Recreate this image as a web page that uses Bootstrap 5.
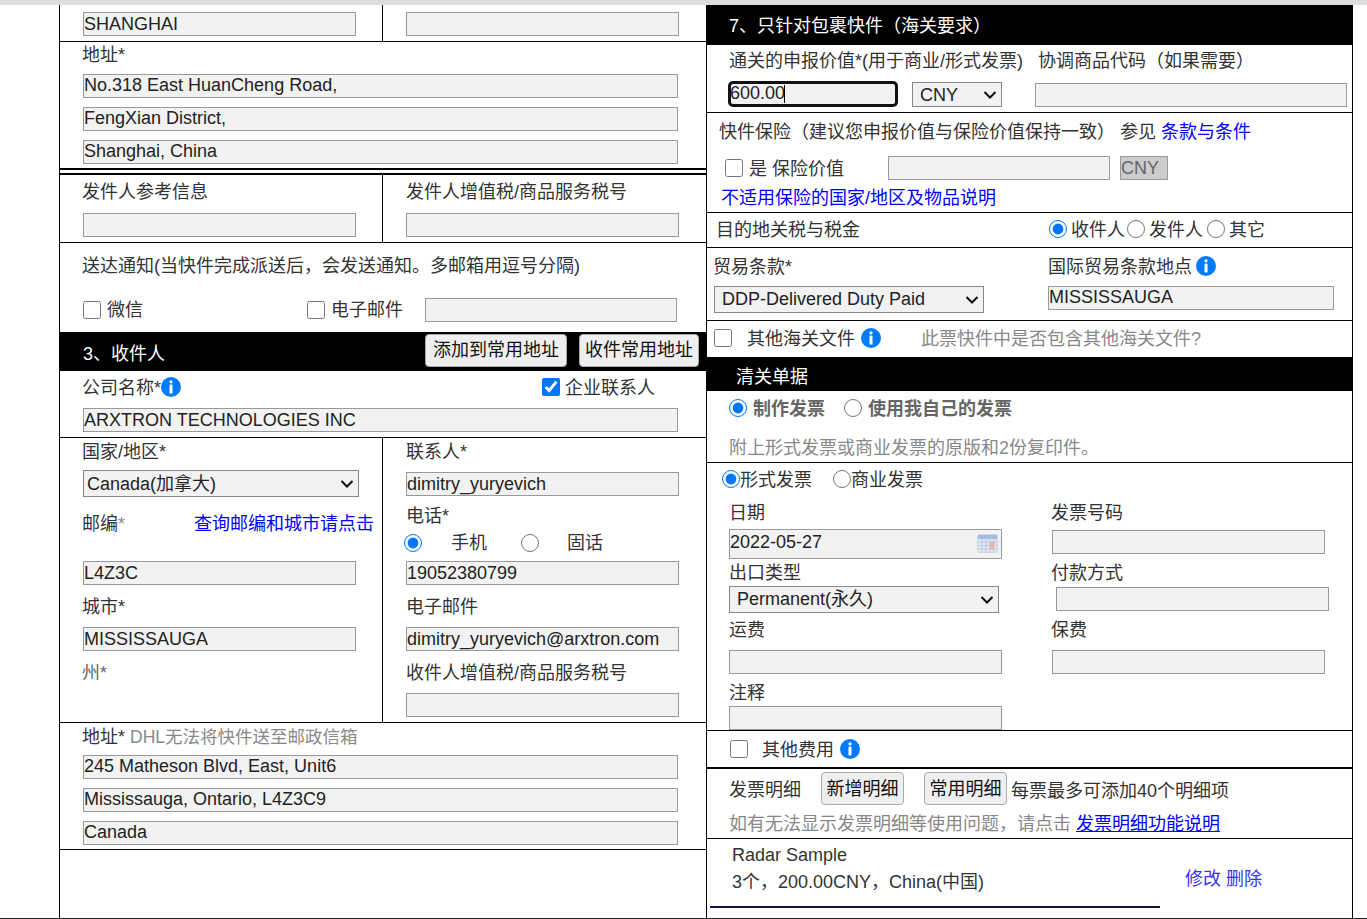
<!DOCTYPE html>
<html lang="zh-CN">
<head>
<meta charset="UTF-8">
<title>运单</title>
<link href="https://cdn.jsdelivr.net/npm/bootstrap@5.3.0/dist/css/bootstrap.min.css" rel="stylesheet">
<style>
    html, body { height: 919px; overflow: hidden; }
    body {
        background: #fff;
        color: #333;
        font-family: "Liberation Sans", "Noto Sans CJK SC", sans-serif;
        font-size: 18px;
        line-height: 24px;
    }
    .page-wrap { height: 919px; border-top: 5px solid #ddd; border-bottom: 1px solid #222; overflow: hidden; padding-left: 59px; }
    .pane-l, .pane-r { width: 647px; height: 100%; border-left: 1px solid #000; flex: none; }
    .pane-r { border-right: 1px solid #000; }

    /* text line that sits 1px lower in its 24px slot */
    .tl, .tl > span, .tl > a { height: 24px; line-height: 26px; }
    .tl-l { margin-left: -1px; }

    .line-b { border-bottom: 1px solid #000; }
    .fld {
        display: block; height: 24px; padding: 0; flex: none;
        background: #f2f2f2; border: 1px solid #999; border-radius: 0;
        color: #222; font-size: 18px; line-height: 20px; outline: none;
    }
    .fld-up { padding-bottom: 2px; }
    .sel {
        display: block; height: 27px; flex: none; padding: 0 20px 0 7px;
        appearance: none;
        background: #f2f2f2 url("data:image/svg+xml,%3csvg xmlns='http://www.w3.org/2000/svg' viewBox='0 0 14 10'%3e%3cpath fill='none' stroke='%23111' stroke-width='2' d='M1.5 2l5.5 5.5L12.5 2'/%3e%3c/svg%3e") no-repeat right 4px center / 14px 10px;
        border: 1px solid #888; border-radius: 0;
        color: #222; font-size: 18px;
    }
    .sel-up { padding-bottom: 2px; }
    .w-273 { width: 273px; }
    .w-595 { width: 595px; }
    .ck { width: 18px; height: 18px; margin: 0; flex: none; }
    .info-ic { width: 20px; height: 24px; flex: none; }
    .txt-gray { color: #888; }
    .txt-mid { color: #666; }
    .txt-dhl { font-size: 17.5px; }
    a.lnk { color: #00f; text-decoration: none; }
    a.lnk-u { color: #00f; text-decoration: underline; }
    a.lnk-soft { color: #33f; text-decoration: none; }
    .bar-dark { background: #000; color: #fff; }
    .btn-plain {
        height: 33px; padding: 0 7px; background: #efefef; color: #111;
        border: 1px solid #aaa; border-radius: 4px; font-size: 18px; line-height: 28px;
    }
    .btn-bar { padding-bottom: 2px; }
    .btn-bar-sm { padding-left: 5px; padding-right: 5px; }

    /* left pane */
    .ls-top { height: 37px; }
    .lcol-a { width: 323px; padding-left: 23px; border-right: 1px solid #000; flex: none; }
    .lcol-b { padding-left: 23px; flex: 1; }
    .ls-top .lcol-a, .ls-top .lcol-b { padding-top: 7px; }
    .addr-box { padding: 0 0 4px 23px; }
    .addr-box .fld { margin-top: 9px; }
    .addr-box .fld.first { margin-top: 8px; }
    .addr-box.dbl { border-bottom: 7px double #000; }
    .addr-recv { padding-top: 1px; }
    .addr-recv .fld.first { margin-top: 7px; }
    .ls-ref { height: 68px; }
    .ls-ref .lcol-a, .ls-ref .lcol-b { padding-top: 4px; }
    .mt-10 { margin-top: 10px; }
    .ls-notify { padding: 10px 0 10px 23px; }
    .notify-row { margin-top: 21px; height: 24px; }
    .ml-ck-2 { margin-left: 164px; }
    .ml-in-2 { margin-left: 22px; width: 252px; }
    .bar-recv { height: 39px; padding: 2px 7px 0 23px; }
    .bar-recv .bar-ttl { margin-top: 8px; }
    .ls-comp { padding: 4px 0 5px 23px; }
    .ck-comp { margin-left: 361px; }
    .ls-comp .fld { margin-top: 9px; }
    .ls-contact { height: 285px; }
    .ls-contact .lcol-a, .ls-contact .lcol-b { padding-top: 1px; }
    .sel-country { width: 276px; margin-top: 7px; padding-left: 3px; }
    .zip-line { margin-top: 14px; width: 292px; }
    .mt-26 { margin-top: 26px; }
    .mt-9 { margin-top: 9px; }
    .mt-8 { margin-top: 8px; }
    .mt-7 { margin-top: 7px; }
    .tel-row { height: 34px; padding-bottom: 2px; margin-left: -2px; }
    .tel-row .gap-a { margin-left: 29px; }
    .tel-row .gap-b { margin-left: 34px; }
    .tel-row .gap-c { margin-left: 28px; }

    /* right pane */
    .bar-r7 { height: 40px; padding: 8px 0 0 22px; }
    .rs-decl { padding: 3px 5px 5px 22px; }
    .decl-lab-b { margin-left: 15px; }
    .decl-ctl { margin-top: 10px; height: 25px; }
    .focus-wrap { width: 168px; height: 24px; flex: none; }
    .fld-focus { width: 100%; border: 2px solid #111; border-radius: 4px; box-shadow: 0 0 0 1px #111; text-indent: -1px; }
    .caret-mark { position: absolute; left: 55px; top: 3px; width: 1px; height: 18px; background: #000; }
    .sel-cny { width: 90px; height: 25px; margin-left: 15px; }
    .fld-hs { width: 312px; margin: 1px 0 0 33px; }
    .rs-ins { padding: 6px 0 3px 12px; }
    .ins-row { margin-top: 13px; padding-left: 6px; }
    .ins-lab { margin-left: 6px; width: 139px; }
    .fld-ins { width: 222px; }
    .cny-tag { width: 48px; height: 24px; margin-left: 10px; background: #ccc; border: 1px solid #999; color: #666; line-height: 22px; }
    .ins-link { margin: 5px 0 0 2px; }
    .rs-tax { padding: 4px 0 6px 9px; }
    .tax-lab { width: 333px; flex: none; }
    .rad-gap { margin-left: 2px; }
    .rad-gap-b { margin-left: 4px; }
    .rs-terms { padding: 6px 0 7px 7px; }
    .terms-col { width: 334px; flex: none; }
    .sel-terms { width: 270px; margin-top: 8px; }
    .fld-place { width: 286px; margin-top: 8px; }
    .rs-other { padding: 5px 0 7px 7px; }
    .oth-lab { margin-left: 15px; }
    .oth-hint { margin-left: 40px; }
    .bar-docs { height: 34px; padding: 7px 0 0 29px; }
    .rs-docs { padding: 5px 0 3px 22px; }
    .rs-docs .mt-15 { margin-top: 15px; }
    .ml-5 { margin-left: 5px; }
    .ml-6 { margin-left: 6px; }
    .ml-19 { margin-left: 19px; }
    .ml-21 { margin-left: 21px; }
    .rs-inv { height: 268px; padding: 4px 0 0 15px; }
    .inv-grid { margin: 9px 0 0 7px; }
    .inv-l { width: 323px; flex: none; }
    .date-wrap { width: 273px; height: 30px; margin-top: 5px; }
    .date-wrap .fld { height: 30px; width: 100%; padding-bottom: 4px; }
    .cal-ic { position: absolute; right: 4px; top: 5px; width: 21px; height: 19px; opacity: .8; }
    .sel-exp { width: 270px; margin-top: 2px; }
    .ml-pay { margin-left: 4px; }
    .mt-1p { margin-top: 1px; }
    .mt-6 { margin-top: 6px; }
    .mt-3p { margin-top: 3px; }
    .mt-4p { margin-top: 4px; }
    .mt-2p { margin-top: 2px; }
    .rs-fee { padding: 6px 0 6px 23px; border-bottom: 2px solid #000; }
    .ml-14 { margin-left: 14px; }
    .rs-detail { padding: 3px 0 3px 22px; }
    .det-lab { width: 92px; flex: none; padding-top: 6px; }
    .btn-det { width: 83px; padding: 0; }
    .ml-20 { margin-left: 20px; }
    .det-note { padding-top: 7px; margin-left: 4px; }
    .rs-item { padding-top: 4px; }
    .item-main { width: 478px; padding-left: 25px; flex: none; }
    .item-act { padding-top: 24px; }
    .item-rule { width: 450px; height: 2px; margin: 12px 0 0 3px; background: #14124a; }
</style>
</head>
<body>
<svg class="d-none">
    <symbol id="ic-info" viewBox="0 0 20 24">
        <circle cx="10" cy="12" r="10" fill="#007bff"/>
        <circle cx="10" cy="6.8" r="1.6" fill="#fff"/>
        <rect x="8.5" y="9.6" width="3" height="9" rx=".6" fill="#fff"/>
    </symbol>
</svg>
<div class="page-wrap d-flex">
    <div class="pane-l">
        <div class="ls-top d-flex line-b">
            <div class="lcol-a"><input class="fld w-273" value="SHANGHAI"></div>
            <div class="lcol-b"><input class="fld w-273"></div>
        </div>
        <div class="addr-box dbl">
            <div class="tl tl-l">地址*</div>
            <input class="fld fld-up w-595 first" value="No.318 East HuanCheng Road,">
            <input class="fld fld-up w-595" value="FengXian District,">
            <input class="fld fld-up w-595" value="Shanghai, China">
        </div>
        <div class="ls-ref d-flex line-b">
            <div class="lcol-a">
                <div class="tl tl-l">发件人参考信息</div>
                <input class="fld w-273 mt-10">
            </div>
            <div class="lcol-b">
                <div class="tl">发件人增值税/商品服务税号</div>
                <input class="fld w-273 mt-10">
            </div>
        </div>
        <div class="ls-notify">
            <div class="tl tl-l">送达通知(当快件完成派送后，会发送通知。多邮箱用逗号分隔)</div>
            <div class="notify-row d-flex align-items-center">
                <input type="checkbox" class="ck">
                <span class="ml-6">微信</span>
                <input type="checkbox" class="ck ml-ck-2">
                <span class="ml-6">电子邮件</span>
                <input class="fld ml-in-2">
            </div>
        </div>
        <div class="bar-recv bar-dark d-flex gap-2 align-items-start">
            <div class="bar-ttl me-auto">3、收件人</div>
            <button class="btn-plain btn-bar" type="button">添加到常用地址</button>
            <button class="btn-plain btn-bar btn-bar-sm ms-1" type="button">收件常用地址</button>
        </div>
        <div class="ls-comp line-b">
            <div class="tl tl-l d-flex align-items-center">
                <span>公司名称*</span>
                <svg class="info-ic"><use href="#ic-info"/></svg>
                <input type="checkbox" class="ck ck-comp" checked>
                <span class="ml-5">企业联系人</span>
            </div>
            <input class="fld w-595" value="ARXTRON TECHNOLOGIES INC">
        </div>
        <div class="ls-contact d-flex line-b">
            <div class="lcol-a">
                <div class="tl tl-l">国家/地区*</div>
                <select class="sel sel-country"><option>Canada(加拿大)</option></select>
                <div class="tl tl-l zip-line d-flex justify-content-between">
                    <span>邮编<span class="txt-gray">*</span></span>
                    <a href="#" class="lnk">查询邮编和城市请点击</a>
                </div>
                <input class="fld w-273 mt-26" value="L4Z3C">
                <div class="tl tl-l mt-9">城市*</div>
                <input class="fld w-273 mt-9" value="MISSISSAUGA">
                <div class="tl tl-l mt-9 txt-mid">州*</div>
            </div>
            <div class="lcol-b">
                <div class="tl">联系人*</div>
                <input class="fld w-273 mt-9" value="dimitry_yuryevich">
                <div class="tl mt-7">电话*</div>
                <div class="tel-row d-flex align-items-center">
                    <input type="radio" class="ck" name="tel" checked>
                    <span class="gap-a">手机</span>
                    <input type="radio" class="ck gap-b" name="tel">
                    <span class="gap-c">固话</span>
                </div>
                <input class="fld w-273" value="19052380799">
                <div class="tl mt-9">电子邮件</div>
                <input class="fld w-273 mt-9" value="dimitry_yuryevich@arxtron.com">
                <div class="tl mt-9">收件人增值税/商品服务税号</div>
                <input class="fld w-273 mt-9">
            </div>
        </div>
        <div class="addr-box addr-recv line-b">
            <div class="tl tl-l">地址* <span class="txt-gray txt-dhl">DHL无法将快件送至邮政信箱</span></div>
            <input class="fld fld-up w-595 first" value="245 Matheson Blvd, East, Unit6">
            <input class="fld fld-up w-595" value="Mississauga, Ontario, L4Z3C9">
            <input class="fld fld-up w-595" value="Canada">
        </div>
    </div>

    <div class="pane-r">
        <div class="bar-r7 bar-dark"><div class="tl">7、只针对包裹快件（海关要求）</div></div>
        <div class="rs-decl line-b">
            <div class="tl d-flex">
                <span>通关的申报价值*(用于商业/形式发票)</span>
                <span class="decl-lab-b">协调商品代码（如果需要）</span>
            </div>
            <div class="decl-ctl d-flex">
                <div class="focus-wrap position-relative">
                    <input class="fld fld-up fld-focus" value="600.00">
                    <span class="caret-mark"></span>
                </div>
                <select class="sel sel-cny"><option>CNY</option></select>
                <input class="fld fld-hs">
            </div>
        </div>
        <div class="rs-ins line-b">
            <div class="tl">快件保险（建议您申报价值与保险价值保持一致） 参见 <a href="#" class="lnk">条款与条件</a></div>
            <div class="tl ins-row d-flex align-items-center">
                <input type="checkbox" class="ck">
                <span class="ins-lab">是 保险价值</span>
                <input class="fld fld-ins">
                <div class="cny-tag">CNY</div>
            </div>
            <div class="tl ins-link"><a href="#" class="lnk">不适用保险的国家/地区及物品说明</a></div>
        </div>
        <div class="rs-tax d-flex align-items-center line-b">
            <div class="tax-lab tl">目的地关税与税金</div>
            <input type="radio" class="ck" name="duty" checked>
            <div class="tl ms-1">收件人</div>
            <input type="radio" class="ck rad-gap" name="duty">
            <div class="tl ms-1">发件人</div>
            <input type="radio" class="ck rad-gap-b" name="duty">
            <div class="tl ms-1">其它</div>
        </div>
        <div class="rs-terms d-flex line-b">
            <div class="terms-col">
                <div class="tl tl-l">贸易条款*</div>
                <select class="sel sel-up sel-terms"><option>DDP-Delivered Duty Paid</option></select>
            </div>
            <div>
                <div class="tl d-flex align-items-center"><span>国际贸易条款地点</span><svg class="info-ic ms-1"><use href="#ic-info"/></svg></div>
                <input class="fld fld-up fld-place" value="MISSISSAUGA">
            </div>
        </div>
        <div class="rs-other d-flex align-items-center">
            <input type="checkbox" class="ck">
            <div class="tl oth-lab">其他海关文件</div>
            <svg class="info-ic ml-6"><use href="#ic-info"/></svg>
            <div class="tl oth-hint txt-gray">此票快件中是否包含其他海关文件?</div>
        </div>
        <div class="bar-docs bar-dark"><div class="tl">清关单据</div></div>
        <div class="rs-docs line-b">
            <div class="d-flex align-items-center txt-mid fw-bold">
                <input type="radio" class="ck" name="inv" checked>
                <div class="tl ml-6">制作发票</div>
                <input type="radio" class="ck ml-19" name="inv">
                <div class="tl ml-6">使用我自己的发票</div>
            </div>
            <div class="tl mt-15 txt-gray">附上形式发票或商业发票的原版和2份复印件。</div>
        </div>
        <div class="rs-inv line-b">
            <div class="d-flex align-items-center">
                <input type="radio" class="ck" name="kind" checked>
                <div class="tl">形式发票</div>
                <input type="radio" class="ck ml-21" name="kind">
                <div class="tl">商业发票</div>
            </div>
            <div class="inv-grid d-flex">
                <div class="inv-l">
                    <div class="tl">日期</div>
                    <div class="date-wrap position-relative">
                        <input class="fld" value="2022-05-27">
                        <svg class="cal-ic" viewBox="0 0 21 19">
                            <rect x=".5" y=".5" width="20" height="18" rx="1.5" fill="#dbe6f4" stroke="#c5d0e0"/>
                            <rect x="1" y="1" width="19" height="4" fill="#8fb0dc"/>
                            <g stroke="#a9c0e2" stroke-width="1">
                                <path d="M1 8h19M1 11.5h19M1 15h19M5 5v13M9 5v13M13 5v13M17 5v13"/>
                            </g>
                            <rect x="13" y="8" width="4" height="7" fill="#f0a28a"/>
                        </svg>
                    </div>
                    <div class="tl mt-1p">出口类型</div>
                    <select class="sel sel-up sel-exp"><option>Permanent(永久)</option></select>
                    <div class="tl mt-4p">运费</div>
                    <input class="fld w-273 mt-9">
                    <div class="tl mt-6">注释</div>
                    <input class="fld w-273 mt-2p">
                </div>
                <div>
                    <div class="tl tl-l">发票号码</div>
                    <input class="fld w-273 mt-6">
                    <div class="tl tl-l mt-6">付款方式</div>
                    <input class="fld w-273 mt-3p ml-pay">
                    <div class="tl tl-l mt-6">保费</div>
                    <input class="fld w-273 mt-9">
                </div>
            </div>
        </div>
        <div class="rs-fee d-flex align-items-center">
            <input type="checkbox" class="ck">
            <div class="tl ml-14">其他费用</div>
            <svg class="info-ic ml-6"><use href="#ic-info"/></svg>
        </div>
        <div class="rs-detail line-b">
            <div class="d-flex align-items-start">
                <div class="det-lab">发票明细</div>
                <button class="btn-plain btn-det" type="button">新增明细</button>
                <button class="btn-plain btn-det ml-20" type="button">常用明细</button>
                <div class="det-note">每票最多可添加40个明细项</div>
            </div>
            <div class="tl mt-6 txt-gray">如有无法显示发票明细等使用问题，请点击 <a href="#" class="lnk-u">发票明细功能说明</a></div>
        </div>
        <div class="rs-item">
            <div class="d-flex">
                <div class="item-main">
                    <div>Radar Sample</div>
                    <div class="mt-3p">3个，200.00CNY，China(中国)</div>
                </div>
                <div class="item-act"><a href="#" class="lnk-soft">修改</a> <a href="#" class="lnk-soft">删除</a></div>
            </div>
            <div class="item-rule"></div>
        </div>
    </div>
</div>
<script src="https://cdn.jsdelivr.net/npm/bootstrap@5.3.0/dist/js/bootstrap.bundle.min.js"></script>
</body>
</html>
